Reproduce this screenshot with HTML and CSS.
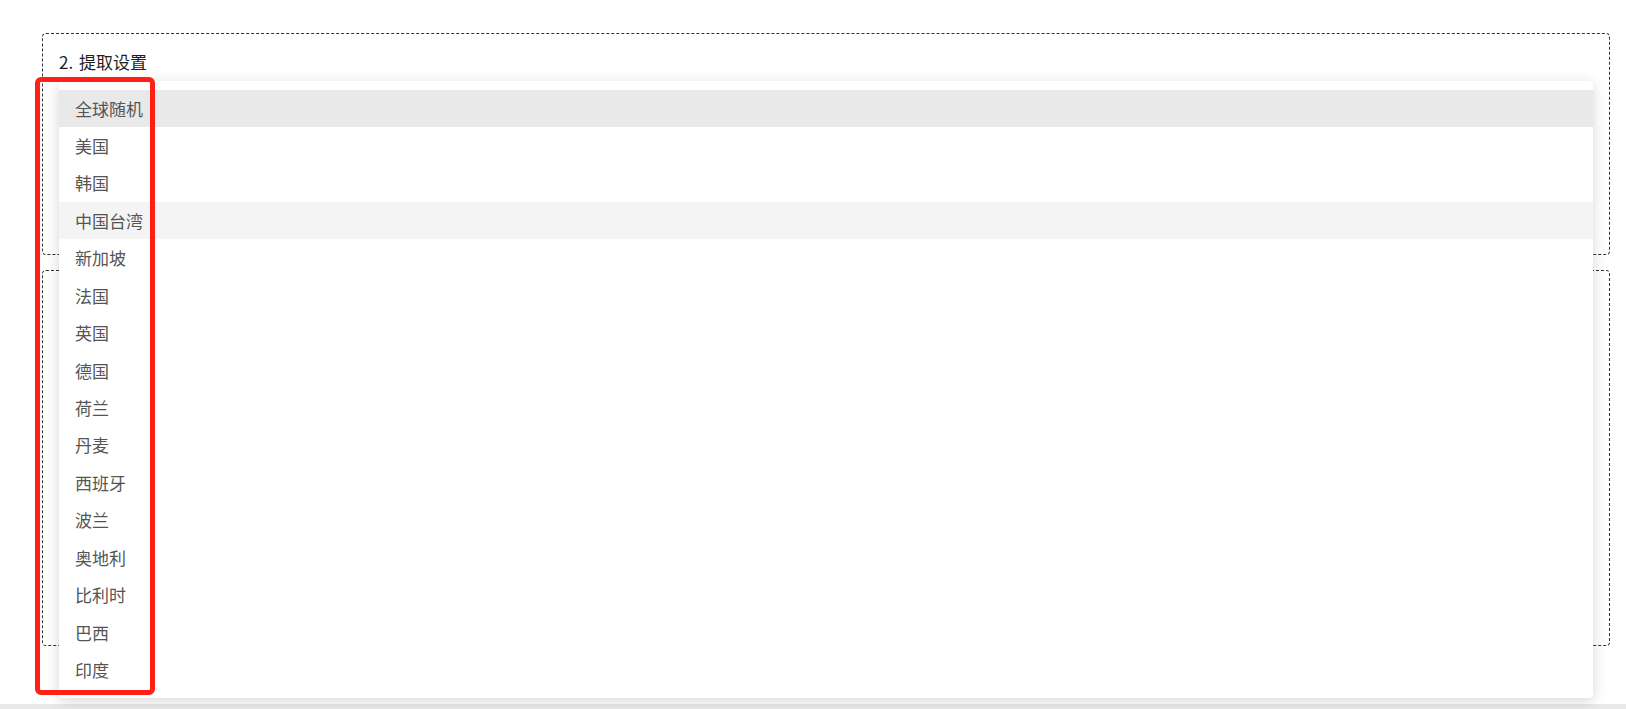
FILE: index.html
```html
<!DOCTYPE html>
<html lang="zh-CN">
<head>
<meta charset="utf-8">
<title>提取设置</title>
<link rel="stylesheet" href="styles.css">
</head>
<body>
<div class="page">
  <main class="content">
    <section class="panel panel-top">
      <h2 class="panel-title">2. 提取设置</h2>
    </section>
    <section class="panel panel-bottom"></section>
  </main>
  <div class="footer-bar"></div>

  <ul class="dropdown">
    <li class="item selected">全球随机</li>
    <li class="item">美国</li>
    <li class="item">韩国</li>
    <li class="item hover">中国台湾</li>
    <li class="item">新加坡</li>
    <li class="item">法国</li>
    <li class="item">英国</li>
    <li class="item">德国</li>
    <li class="item">荷兰</li>
    <li class="item">丹麦</li>
    <li class="item">西班牙</li>
    <li class="item">波兰</li>
    <li class="item">奥地利</li>
    <li class="item">比利时</li>
    <li class="item">巴西</li>
    <li class="item">印度</li>
  </ul>
  <div class="highlight"></div>
</div>
</body>
</html>
```

FILE: styles.css
```css
html, body {
  margin: 0;
  padding: 0;
  background: #ffffff;
}

body {
  font-family: "Noto Sans CJK SC", "Noto Sans", "Liberation Sans", sans-serif;
  font-size: 17px;
  color: #303133;
}

.page {
  position: relative;
  width: 1626px;
  height: 709px;
  display: flex;
  flex-direction: column;
  overflow: hidden;
}

.content {
  flex: 1;
  display: flex;
  flex-direction: column;
  gap: 15px;
  padding: 33px 16px 0 42px;
}

.panel {
  border: 1px dashed #333;
  border-radius: 4px;
  box-sizing: border-box;
}

.panel-top {
  height: 222px;
  padding: 17px 16px 0 16px;
}

.panel-bottom {
  height: 376px;
}

.panel-title {
  margin: 0;
  font-size: 17px;
  font-weight: 400;
  line-height: 22px;
  color: #1f1f1f;
  word-spacing: 2px;
}

.footer-bar {
  height: 5px;
  background: #e9e9e9;
}

.dropdown {
  position: absolute;
  left: 59px;
  top: 81px;
  width: 1534px;
  margin: 0;
  padding: 8.5px 0 9px;
  list-style: none;
  background: #fff;
  border-radius: 4px;
  box-shadow: 0 3px 14px rgba(0, 0, 0, 0.16);
  box-sizing: border-box;
}

.item {
  height: 37.45px;
  line-height: 37.45px;
  padding: 0 16px;
  color: #555;
  font-size: 17px;
  white-space: nowrap;
}

.item.selected {
  background: #e9e9e9;
}

.item.hover {
  background: #f4f4f4;
}

.highlight {
  position: absolute;
  left: 35px;
  top: 77px;
  width: 120px;
  height: 618px;
  border: 5px solid #ff2116;
  border-radius: 6px;
  box-sizing: border-box;
}
```
